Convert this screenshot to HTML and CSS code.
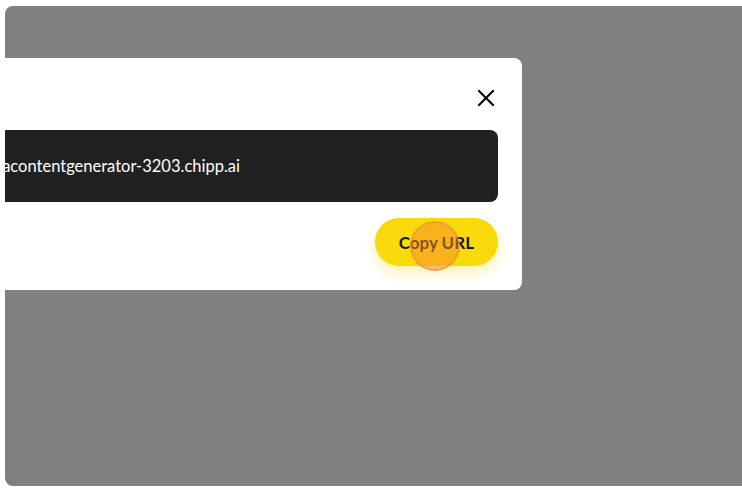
FILE: index.html
```html
<!DOCTYPE html>
<html lang="en">
<head>
<meta charset="utf-8">
<title>Share</title>
<link rel="stylesheet" href="styles.css">
</head>
<body>
<div class="backdrop">
  <div class="modal">
    <div class="modal-header">
      <button class="close" aria-label="Close">
        <svg width="24" height="24" viewBox="0 0 24 24"><path d="M5 5L19 19M19 5L5 19" stroke="#000" stroke-width="2" fill="none" stroke-linecap="square"/></svg>
      </button>
    </div>
    <div class="url-box"><span class="url-text">https://socialmediacontentgenerator-3203.chipp.ai</span></div>
    <div class="actions">
      <button class="copy-btn">Copy URL</button>
      <span class="click-dot"></span>
    </div>
  </div>
</div>
</body>
</html>
```
FILE: styles.css
```css
html, body {
  margin: 0;
  padding: 0;
  background: #ffffff;
  width: 742px;
  height: 495px;
  overflow: hidden;
}
body {
  font-family: "Lato", "Noto Sans", sans-serif;
  padding: 6px 0 0 5px;
  box-sizing: border-box;
}
.backdrop {
  background: #808080;
  height: 480px;
  width: 745px;
  border-radius: 8px 0 0 8px;
  overflow: hidden;
  display: flex;
  justify-content: flex-end;
  align-items: flex-start;
  padding: 52px 228px 0 0;
  box-sizing: border-box;
}
.modal {
  flex: 0 0 600px;
  width: 600px;
  background: #ffffff;
  border-radius: 8px;
  padding: 24px;
  box-sizing: border-box;
  display: flex;
  flex-direction: column;
  gap: 16px;
}
.modal-header {
  height: 32px;
  display: flex;
  justify-content: flex-end;
  align-items: center;
}
.close {
  border: 0;
  background: none;
  padding: 0;
  width: 24px;
  height: 24px;
  cursor: pointer;
  display: flex;
}
.url-box {
  height: 72px;
  background: #212121;
  border-radius: 8px;
  display: flex;
  align-items: center;
  justify-content: flex-end;
  padding-right: 258px;
  overflow: hidden;
  white-space: nowrap;
}
.url-text {
  color: #ffffff;
  font-size: 16.5px;
  flex: 0 0 auto;
}
.actions {
  display: flex;
  justify-content: flex-end;
  position: relative;
}
.copy-btn {
  height: 48px;
  padding: 0 24px;
  border: 0;
  border-radius: 24px;
  background: #f8d90a;
  color: #161616;
  font-family: "Lato", "Noto Sans", sans-serif;
  font-weight: 700;
  font-size: 17px;
  box-shadow: 0 6px 14px rgba(248, 217, 10, 0.35);
}
.click-dot {
  position: absolute;
  right: 38px;
  top: 3px;
  width: 50px;
  height: 50px;
  border-radius: 50%;
  background: rgba(246, 140, 48, 0.5);
  border: 2px solid rgba(246, 140, 48, 0.55);
  box-sizing: border-box;
}
```
